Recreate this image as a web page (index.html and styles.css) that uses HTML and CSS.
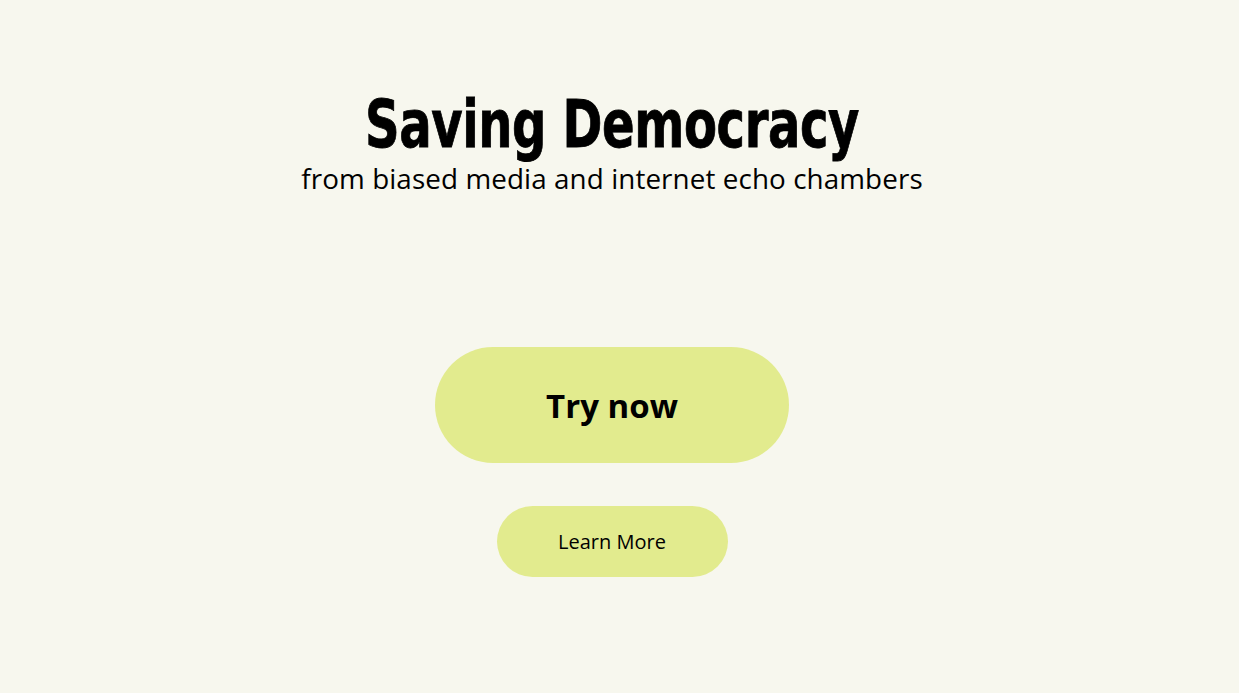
FILE: index.html
```html
<!DOCTYPE html>
<html lang="en">
<head>
<meta charset="utf-8">
<title>Saving Democracy</title>
<link rel="stylesheet" href="styles.css">
</head>
<body>
<main class="hero">
  <header class="heading">
    <h1 class="title"><span class="title-text">Saving Democracy</span></h1>
    <p class="subtitle">from biased media and internet echo chambers</p>
  </header>
  <div class="actions">
    <a class="btn btn-primary" href="#">Try now</a>
    <a class="btn btn-secondary" href="#">Learn More</a>
  </div>
</main>
</body>
</html>
```
FILE: styles.css
```css
html, body {
  margin: 0;
  padding: 0;
  background: #f7f7ee;
  color: #000;
}
body {
  font-family: "Open Sans", "DejaVu Sans", sans-serif;
}
.hero {
  display: flex;
  flex-direction: column;
  align-items: center;
  padding: 88px 15px 0 0;
}
.heading {
  display: flex;
  flex-direction: column;
  align-items: center;
}
.title {
  margin: 0;
  font-family: "DejaVu Sans Condensed", "DejaVu Sans", sans-serif;
  font-weight: 700;
  font-size: 66px;
  line-height: 74px;
  letter-spacing: -0.5px;
  width: 496px;
  display: flex;
  justify-content: center;
}
.title-text {
  display: inline-block;
  white-space: nowrap;
  transform: scaleX(0.81);
  -webkit-text-stroke: 0.8px #000;
}
.subtitle {
  margin: 0;
  font-family: "Open Sans", sans-serif;
  font-size: 27.8px;
  line-height: 32px;
  letter-spacing: 0.1px;
}
.actions {
  display: flex;
  flex-direction: column;
  align-items: center;
  gap: 43px;
  margin-top: 153px;
}
.btn {
  display: flex;
  align-items: center;
  justify-content: center;
  background: #e2eb8e;
  color: #000;
  text-decoration: none;
}
.btn-primary {
  width: 354px;
  height: 116px;
  border-radius: 58px;
  font-size: 33px;
  font-weight: 700;
}
.btn-secondary {
  width: 231px;
  height: 71px;
  border-radius: 36px;
  font-size: 20px;
}
```
